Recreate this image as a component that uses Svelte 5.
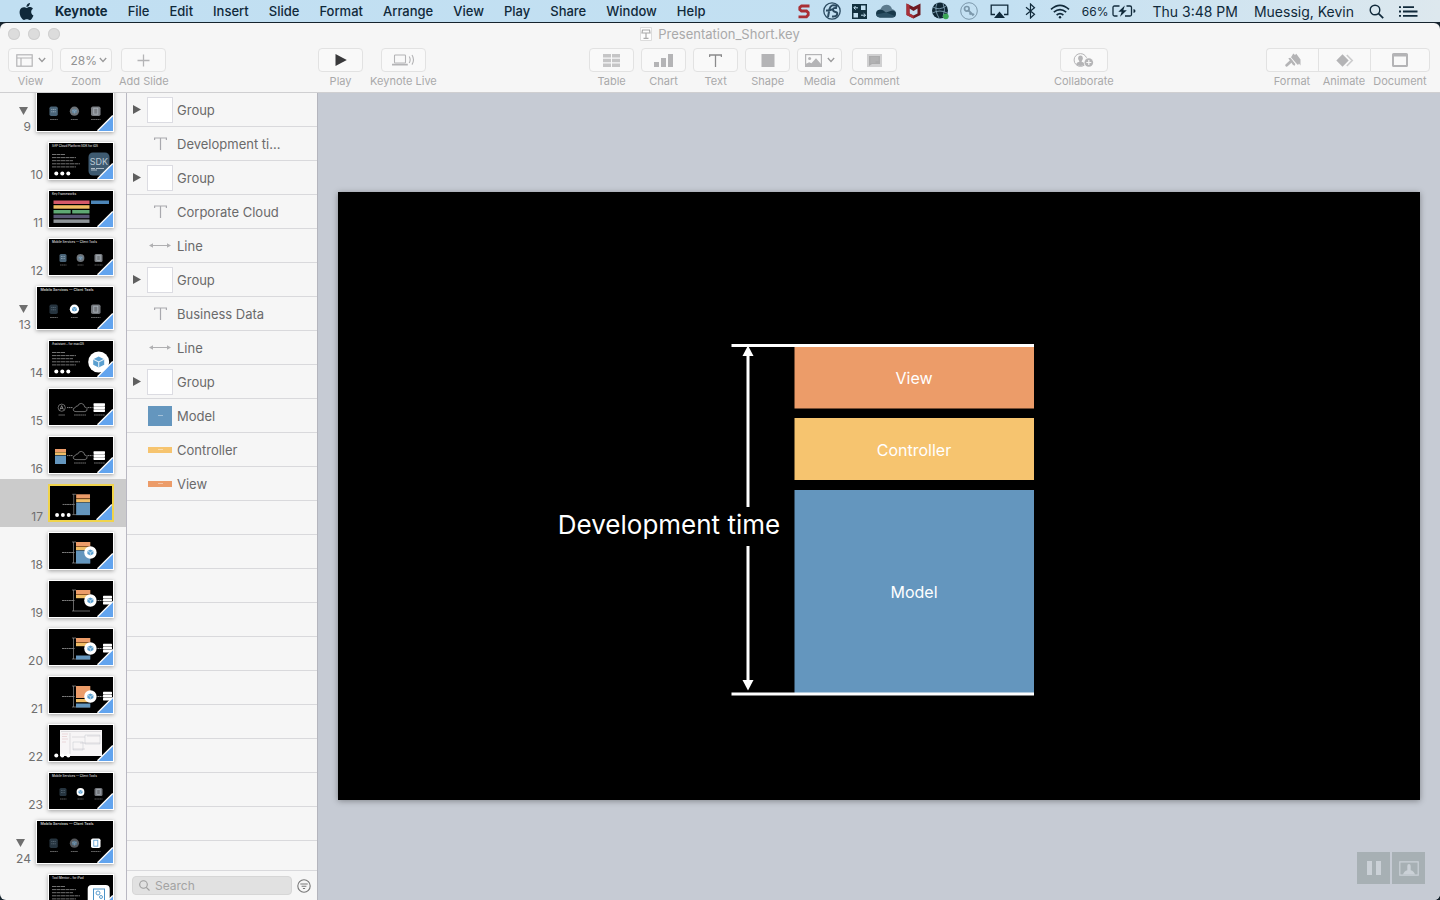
<script>
  const menus = ['File', 'Edit', 'Insert', 'Slide', 'Format', 'Arrange', 'View', 'Play', 'Share', 'Window', 'Help'];

  const playTools = [
    { label: 'Play', icon: 'play' },
    { label: 'Keynote Live', icon: 'live' }
  ];
  const insertTools = [
    { label: 'Table', icon: 'table' },
    { label: 'Chart', icon: 'chart' },
    { label: 'Text', icon: 'text' },
    { label: 'Shape', icon: 'shape' },
    { label: 'Media', icon: 'media' },
    { label: 'Comment', icon: 'comment' }
  ];
  const panelTools = [
    { label: 'Format', icon: 'format' },
    { label: 'Animate', icon: 'animate' },
    { label: 'Document', icon: 'document' }
  ];

  const slides = [
    { n: 9, big: true, kind: 'tools', lit: 0 },
    { n: 10, kind: 'sdk', title: 'SAP Cloud Platform SDK for iOS', dots: true },
    { n: 11, kind: 'bars', title: 'Key Frameworks' },
    { n: 12, kind: 'tools', lit: 0 },
    { n: 13, big: true, kind: 'tools', lit: 2 },
    { n: 14, kind: 'assistant', title: 'Assistant – for macOS', dots: true },
    { n: 15, kind: 'cloud' },
    { n: 16, kind: 'cloud', blocks: true },
    { n: 17, kind: 'mvc', o: 4, y: 14, b: 13, dots: true, selected: true },
    { n: 18, kind: 'mvc', o: 4, y: 14, b: 13, badge: true },
    { n: 19, kind: 'mvc', o: 4, y: 14, b: 0, badge: true, server: true },
    { n: 20, kind: 'mvc', o: 4, y: 14, b: 4, badge: true, server: true },
    { n: 21, kind: 'mvc', o: 12, y: 22, b: 4, badge: true, server: true },
    { n: 22, kind: 'screen', dots: true },
    { n: 23, kind: 'tools', lit: 2 },
    { n: 24, big: true, kind: 'tools', lit: 3 },
    { n: 25, kind: 'ipad', title: 'Tool Mentor – for iPad' }
  ];

  const objects = [
    { type: 'group', label: 'Group' },
    { type: 'text', label: 'Development ti...' },
    { type: 'group', label: 'Group' },
    { type: 'text', label: 'Corporate Cloud' },
    { type: 'line', label: 'Line' },
    { type: 'group', label: 'Group' },
    { type: 'text', label: 'Business Data' },
    { type: 'line', label: 'Line' },
    { type: 'group', label: 'Group' },
    { type: 'model', label: 'Model' },
    { type: 'controller', label: 'Controller' },
    { type: 'view', label: 'View' }
  ];
  const emptyRows = Array.from({ length: 12 });

  // Fill of the three client tool icons, by which of them is highlighted.
  function toolFill(lit, i) {
    if (lit === i) return '#ffffff';
    if (lit === 0) return ['#4a6478', '#6e747a', '#7b7f84'][i - 1];
    return ['#26343f', '#55585c', '#74777c'][i - 1];
  }
</script>

{#snippet chevron()}
  <svg class="chev" width="8" height="6" viewBox="0 0 8 6" fill="none" stroke="currentColor" stroke-width="1.3"><path d="M.8 1 4 4.5 7.2 1" /></svg>
{/snippet}

{#snippet toolIcon(name)}
  {#if name === 'view'}
    <svg width="17" height="13" viewBox="0 0 17 13" fill="none" stroke="currentColor" stroke-width="1.2"><rect x=".8" y=".8" width="15.4" height="11.4" /><path d="M1 4h15M5 4v8" /></svg>
  {:else if name === 'add'}
    <svg width="13" height="13" viewBox="0 0 13 13" stroke="currentColor" stroke-width="1.3"><path d="M6.5.5v12M.5 6.5h12" /></svg>
  {:else if name === 'play'}
    <svg width="12" height="12" viewBox="0 0 12 12" fill="#39393b"><path d="M.5 0 11.8 6 .5 12z" /></svg>
  {:else if name === 'live'}
    <svg width="23" height="12" viewBox="0 0 23 12" fill="none" stroke="currentColor" stroke-width="1.1"><rect x="2.5" y="1" width="11" height="8" rx=".8" /><path d="M0 10.6h15.8" stroke-width="1.6" /><path d="M17.2 2.5q2 3.2 0 6.5M20 1q3 4.7 0 9.6" /></svg>
  {:else if name === 'table'}
    <svg width="17" height="13" viewBox="0 0 17 13" fill="currentColor" opacity=".75"><path d="M0 0h8v3.6H0zM9 0h8v3.6H9zM0 4.7h8v3.6H0zM9 4.7h8v3.6H9zM0 9.4h8V13H0zM9 9.4h8V13H9z" /></svg>
  {:else if name === 'chart'}
    <svg width="19" height="14" viewBox="0 0 19 14" fill="currentColor"><path d="M0 9h5v5H0zM7 5h5v9H7zM14 1h5v13h-5z" /></svg>
  {:else if name === 'text'}
    <svg width="13" height="13" viewBox="0 0 13 13" fill="none" stroke="#8b8b8c" stroke-width="1.3"><path d="M.6 3V1h11.8v2M6.5 1v12" /></svg>
  {:else if name === 'shape'}
    <svg width="14" height="13" viewBox="0 0 14 13" fill="currentColor"><path d="M.5 0h13v13H.5z" /></svg>
  {:else if name === 'media'}
    <svg width="17" height="13" viewBox="0 0 17 13"><rect x=".6" y=".6" width="15.8" height="11.8" fill="none" stroke="currentColor" stroke-width="1.2" /><circle cx="4.6" cy="4.4" r="1.5" fill="currentColor" /><path d="M1 12V9.8l3.2-1.6 2.2 1 4.6-5L16 10v2z" fill="currentColor" /></svg>
  {:else if name === 'comment'}
    <svg width="15" height="13" viewBox="0 0 15 13"><path d="M0 0h15v13H0z" fill="currentColor" opacity=".6" /><path d="M2 2h11v8H5l-3 2z" fill="#a2a2a4" opacity=".8" /><path d="M3.5 4h8M3.5 6h8M3.5 8h5" stroke="#c4c4c4" stroke-width=".6" /></svg>
  {:else if name === 'collaborate'}
    <svg width="21" height="14" viewBox="0 0 21 14"><circle cx="7.5" cy="7" r="6.4" fill="none" stroke="currentColor" /><ellipse cx="7.5" cy="5.2" rx="2.3" ry="2.8" fill="currentColor" /><path d="M3 11.2q1-2 3.3-2.4V7h2.4v1.8q2.3.4 3.3 2.4Q10 13 7.5 13T3 11.2z" fill="currentColor" /><circle cx="15.8" cy="9.5" r="5.1" fill="#f6f6f6" /><circle cx="15.8" cy="9.5" r="4.3" fill="currentColor" /><path d="M15.8 7v5M13.3 9.5h5" stroke="#f6f6f6" stroke-width="1.2" /></svg>
  {:else if name === 'format'}
    <svg width="16" height="14" viewBox="0 0 16 14" fill="currentColor"><path d="M1.7 12.3 6 8.3" fill="none" stroke="currentColor" stroke-width="2.8" stroke-linecap="round" /><path d="m3.3 5.3 2-.6 5 6.3-.5 1.7-1.8-.6z" /><path d="M6 4.2 8.3.4 10 2 11.3.8 15.5 6.5v6L14 10.6l-1 1.5-1.8-1.8z" /></svg>
  {:else if name === 'animate'}
    <svg width="18" height="13" viewBox="0 0 18 13"><path d="m6.5.3 6.2 6.2-6.2 6.2L.3 6.5z" fill="currentColor" /><path d="m10.8 1 5.4 5.5-5.4 5.5" fill="none" stroke="currentColor" stroke-width="1.6" opacity=".65" /></svg>
  {:else if name === 'document'}
    <svg width="16" height="14" viewBox="0 0 16 14" fill="none" stroke="currentColor"><rect x="1" y="1" width="14" height="12" rx=".6" stroke-width="2" /><path d="M1 2.2h14" stroke-width="2.6" /></svg>
  {/if}
{/snippet}

{#snippet tool(t)}
  <button class="tool" type="button">
    <span class="cap {t.icon}">{@render toolIcon(t.icon)}{#if t.icon === 'media' || t.icon === 'view'}{@render chevron()}{/if}</span>
    <span class="name">{t.label}</span>
  </button>
{/snippet}

{#snippet server(x, y, w)}
  <g fill="#fff"><rect {x} {y} width={w} height="2.6" rx=".6" /><rect {x} y={y + 3} width={w} height="2.6" rx=".6" /><rect {x} y={y + 6} width={w} height="2.6" rx=".6" /></g>
{/snippet}

{#snippet bodyLines()}
  <path d="M3 11.5h13M3 14.6h24M3 17.7h21M3 20.8h28M3 23.9h24" stroke="#8f8f8f" stroke-width=".8" stroke-dasharray="4 .5" />
{/snippet}

{#snippet cube(cx, cy, s)}
  <path d="M{cx - s} {cy - s * 0.5}L{cx} {cy - s}L{cx + s} {cy - s * 0.5}V{cy + s * 0.5}L{cx} {cy + s}L{cx - s} {cy + s * 0.5}z" fill="#5a9fd0" />
  <path d="M{cx - s} {cy - s * 0.5}L{cx} {cy}L{cx + s} {cy - s * 0.5}M{cx} {cy}V{cy + s}" fill="none" stroke="#e3f0f9" stroke-width={s * 0.2} />
{/snippet}

{#snippet thumb(s)}
  <svg class="pic" viewBox="0 0 64 36" preserveAspectRatio="xMidYMid slice" aria-hidden="true">
    <rect width="64" height="36" fill="#000" />
    {#if s.title || s.kind === 'tools'}
      <text x="3" y="3.8" class="tiny">{s.title ?? 'Mobile Services — Client Tools'}</text>
    {/if}
    {#if s.kind === 'tools'}
      <rect x="10.5" y="15" width="7" height="8" rx="1.5" fill={toolFill(s.lit, 1)} />
      <path d="M12 17.5h4M12 19.5h4" stroke="#9fb3c2" stroke-width=".8" stroke-dasharray="1 .4" opacity={s.lit ? 0.4 : 0.9} />
      <circle cx="31.5" cy="19" r="3.9" fill={toolFill(s.lit, 2)} />
      <g opacity={s.lit === 2 ? 1 : 0.5}>{@render cube(31.5, 19, 2)}</g>
      <rect x="45.5" y="15" width="8" height="8" rx="1.5" fill={toolFill(s.lit, 3)} />
      <rect x="47.8" y="16.5" width="3.4" height="5" fill="none" stroke={s.lit === 3 ? '#5a9fd0' : '#a9b2ba'} stroke-width=".7" />
      <path d="M11 26h6.5M28.5 26h6M45.5 26h8" stroke="#777" stroke-width=".7" stroke-dasharray="1.5 .3" />
    {:else if s.kind === 'sdk'}
      {@render bodyLines()}
      <rect x="39.5" y="9.5" width="21" height="23" rx="4.5" fill="#3e5a70" />
      <text x="50" y="22.3" text-anchor="middle" class="sdk">SDK</text>
      <path d="M42 25.5h4M47 25.5h8M42 27h6" stroke="#b9c6cf" stroke-width=".9" />
    {:else if s.kind === 'bars'}
      <rect x="4.5" y="9.5" width="36" height="3.5" fill="#d4596a" /><rect x="42" y="9.5" width="18" height="3.5" fill="#4d86b8" />
      <rect x="4.5" y="14.2" width="36" height="3.5" fill="#efbd63" />
      <rect x="4.5" y="19" width="17.2" height="3.5" fill="#5fa873" /><rect x="23.2" y="19" width="17.3" height="3.5" fill="#5fa873" />
      <rect x="4.5" y="23.7" width="36" height="3.5" fill="#5a5775" />
      <rect x="4.5" y="28.4" width="36" height="3.5" fill="#8f9599" />
    {:else if s.kind === 'assistant'}
      {@render bodyLines()}
      <circle cx="49.7" cy="21" r="10.5" fill="#fff" />
      {@render cube(49.7, 21, 5.5)}
    {:else if s.kind === 'cloud'}
      {#if s.blocks}
        <rect x="6" y="12" width="11" height="3" fill="#ec9c69" /><rect x="6" y="15.3" width="11" height="2.7" fill="#f0bd66" /><rect x="6" y="18.5" width="11" height="8.5" fill="#6496be" />
      {:else}
        <circle cx="12.7" cy="18.7" r="3.6" fill="none" stroke="#aaa" stroke-width=".6" /><path d="m11 20.6 1.7-4 1.7 4M11.6 19.4h2.2" fill="none" stroke="#ccc" stroke-width=".6" /><path d="M9.5 26h6.5" stroke="#888" stroke-width=".7" />
      {/if}
      <path d="M27 22.6h9q2.6-.5 2-3-.6-1.7-2.3-1.5-.3-3.3-3.4-3.7-2.8 0-3.5 2.6-2.3-.2-2.6 1.7-2.3.4-2 2.3.5 1.6 2.8 1.6z" fill="none" stroke="#999" stroke-width=".7" />
      <path d="M18 18.6h6M38.5 18.6h5" stroke="#bbb" stroke-width=".7" stroke-dasharray="1.5 .5" />
      {@render server(44.5, 14.3, 11.5)}
      <path d="M25 26h12M45 26h11" stroke="#999" stroke-width=".7" stroke-dasharray="1.8 .3" />
    {:else if s.kind === 'mvc'}
      <path d="M23 9h4M24.5 9v21M23 30h18" stroke="#aaa" stroke-width=".6" fill="none" />
      <path d="M13 19.5h12.5" stroke="#999" stroke-width=".8" stroke-dasharray="2 .3" />
      <rect x="27" y="9" width="14.3" height={s.o} fill="#ec9c69" />
      {#if s.o === 4}<rect x="27" y="13" width="14.3" height="1.2" fill="#8a5426" />{/if}
      <rect x="27" y={s.y} width="14.3" height="3.2" fill="#f0bd66" />
      {#if s.b}<rect x="27" y={30.5 - s.b} width="14.3" height={s.b} fill="#6496be" />{/if}
      {#if s.badge}<circle cx="41.4" cy="19.5" r="6.2" fill="#fff" />{@render cube(41.4, 19.5, 3)}{/if}
      {#if s.server}<path d="M48.5 19.5h5" stroke="#bbb" stroke-width=".8" stroke-dasharray="1.5 .5" />{@render server(54, 14.8, 9)}{/if}
    {:else if s.kind === 'screen'}
      <rect x="11" y="5" width="42" height="26" fill="#f7f5f6" />
      <path d="M12 6.5h40M21 8v21M23 12h13M38 11h13M31 18h20M24 24h12" stroke="#c3c0c6" stroke-width=".5" fill="none" /><path d="M13 9h6M13 11.5h5M13 14h6M13 17h4" stroke="#dfb8bd" stroke-width=".5" /><path d="M36 10h15v9H36zM24 17h10v8H24z" fill="none" stroke="#b5bac6" stroke-width=".4" />
    {:else if s.kind === 'ipad'}
      {@render bodyLines()}
      <rect x="38.7" y="10" width="22" height="24" rx="4" fill="#fff" />
      <rect x="44.5" y="14" width="11" height="15" fill="none" stroke="#4b93c8" stroke-width="1" /><circle cx="49" cy="18" r="2" fill="none" stroke="#4b93c8" stroke-width=".9" /><circle cx="52" cy="22" r="1.5" fill="none" stroke="#4b93c8" stroke-width=".9" />
    {/if}
    {#if s.dots}
      <g fill="#fff"><circle cx="7.3" cy="30.4" r="2" /><circle cx="13.3" cy="30.4" r="2" /><circle cx="19.3" cy="30.4" r="2" /></g>
    {/if}
  </svg>
{/snippet}

<div class="desktop">
  <header class="menubar">
    <nav class="menus">
      <button type="button" aria-label="Apple" class="apple"><svg width="17" height="17" viewBox="0 0 24 24" fill="currentColor"><path d="M12.152 6.896c-.948 0-2.415-1.078-3.96-1.04-2.04.027-3.91 1.183-4.961 3.014-2.117 3.675-.546 9.103 1.519 12.09 1.013 1.454 2.208 3.09 3.792 3.039 1.52-.065 2.09-.987 3.935-.987 1.831 0 2.35.987 3.96.948 1.637-.026 2.676-1.48 3.676-2.948 1.156-1.688 1.636-3.325 1.662-3.415-.039-.013-3.182-1.221-3.22-4.857-.026-3.04 2.48-4.494 2.597-4.559-1.429-2.09-3.623-2.324-4.39-2.376-2-.156-3.675 1.09-4.61 1.09zM15.53 3.83c.843-1.012 1.4-2.427 1.245-3.83-1.207.052-2.662.805-3.532 1.818-.78.896-1.454 2.338-1.273 3.714 1.338.104 2.715-.688 3.559-1.701" /></svg></button>
      <button type="button" class="app-name">Keynote</button>
      {#each menus as m}<button type="button">{m}</button>{/each}
    </nav>
    <div class="status">
      <span class="cell"><svg width="12" height="15" viewBox="0 0 12 15" fill="none" stroke="#a92f35" stroke-width="2.8"><path d="M11.5 2H3.5L1.8 3.5v2L3.5 7h5l1.7 1.7v2.2L8.5 12.8H.5" /></svg></span>
      <span class="cell"><svg width="18" height="18" viewBox="0 0 18 18" fill="none" stroke="#2c4b61"><circle cx="9" cy="9" r="8.2" stroke-width="1.3" /><path d="M14.5 4.5Q8 1 6.5 7L5 15M3 8.5q4 .5 7-1.5M14 6q-4-.5-4 1.5t2.5 2.5T14 13q-1 2-5 1.5" stroke-width="2" /></svg></span>
      <span class="cell mid"><svg width="15" height="15" viewBox="0 0 15 15"><path d="M0 0h15v15H0z" fill="#12303f" /><path d="M9 1.5h4.5V6H9zM1.5 9H6v4.5H1.5z" fill="#c3e0f1" /><path d="M6 3.8H2M3.6 2 1.8 3.8l1.8 1.8M9 11.2h4.5M11.7 9.4l1.8 1.8-1.8 1.8" fill="none" stroke="#c3e0f1" /></svg></span>
      <span class="cell mid"><svg width="20" height="14" viewBox="0 0 20 14"><path d="M4 7.5Q5 1 10.5.8q4 0 5.5 4.2 4 1 4 4.5L10 12z" fill="#5d7b8e" /><path d="M4 13.5q-4-.5-4-4t4-4q3 .2 6 3l6-2q4 0 4 3.5t-4 3.5z" fill="#17384a" /><path d="M4 13.5q-3 0-4-3l10-2 9 3.5q-1.2 1.5-3 1.5z" fill="#2c5064" /></svg></span>
      <span class="cell mid"><svg width="15" height="16" viewBox="0 0 15 16"><path d="M.5.5 7.5 4l7-3.5V12l-7 3.500-7-3.500z" fill="#6e1a22" /><path d="M3.5 5.5 7.5 8l4-2.5v5l-4 2-4-2z" fill="#c3dff0" /><path d="M.5.5 3.5 2v8.500l4 2v3l-7-3.500z" fill="#aa3038" /></svg></span>
      <span class="cell"><svg width="19" height="18" viewBox="0 0 19 18"><circle cx="9" cy="8.5" r="8" fill="#0f2634" /><path d="M2 5q6 4 13-1M1.5 11Q9 7 16 11M6 1q-3 7 2 15M12 1q3 6 0 14" fill="none" stroke="#8eb0c4" stroke-width=".8" /><circle cx="14.8" cy="14.3" r="2.9" fill="#3aa655" /></svg></span>
      <span class="cell"><svg width="18" height="18" viewBox="0 0 18 18" fill="none" stroke="#7b97aa"><circle cx="9" cy="9" r="8.3" stroke-width="1" /><circle cx="6.8" cy="6.8" r="2.3" stroke-width="1.7" /><path d="m8.5 8.5 5 5M11 11l-1.5 1.5M13 12l1 1" stroke-width="1.8" /></svg></span>
      <span class="cell airplay"><svg width="19" height="15" viewBox="0 0 19 15"><path d="M5 10.5H1.2V1.2h16.6v9.3H14" fill="none" stroke="currentColor" stroke-width="1.3" /><path d="m9.5 7.5 5.5 6.5H4z" fill="currentColor" /></svg></span>
      <span class="cell"><svg width="11" height="16" viewBox="0 0 11 16" fill="none" stroke="currentColor" stroke-width="1.2"><path d="m1 4.3 8.5 7-4 3.7V1l4 3.7-8.5 7" /></svg></span>
      <span class="cell wide"><svg width="20" height="15" viewBox="0 0 20 15" fill="none" stroke="currentColor" stroke-width="1.6"><path d="M1 5.3q9-8 18 0M3.8 8.2q6.2-5.2 12.4 0M6.6 11q3.4-2.7 6.8 0" /><circle cx="10" cy="13.3" r="1.2" fill="currentColor" stroke="none" /></svg></span>
      <span class="battery">66%<svg width="24" height="12" viewBox="0 0 24 12"><path d="M7.5 1h-5Q1 1 1 2.5v7Q1 11 2.5 11h3M14.5 1H18q1.500 0 1.500 1.500v7q0 1.500-1.500 1.500h-5" fill="none" stroke="currentColor" stroke-width="1.3" /><path d="M21.5 4q2 .5 2 2t-2 2z" fill="currentColor" /><path d="M12.800.5 6.300 6.800h3.400L8 11.800l6.800-6.600h-3.500z" fill="currentColor" /></svg></span>
      <span class="clock">Thu 3:48 PM</span>
      <span class="user">Muessig, Kevin</span>
      <button type="button" aria-label="Spotlight" class="glyph"><svg width="15" height="15" viewBox="0 0 15 15" fill="none" stroke="currentColor" stroke-width="1.4"><circle cx="6" cy="6" r="4.8" /><path d="m9.6 9.6 4.6 4.6" stroke-width="1.7" /></svg></button>
      <button type="button" aria-label="Notification Center" class="glyph"><svg width="19" height="11" viewBox="0 0 19 11" stroke="currentColor" stroke-width="1.8"><path d="M0 1.2h2M0 5.5h2M0 9.8h2M4 1.2h11M4 5.5h14.5M4 9.8h14.5" /></svg></button>
    </div>
  </header>

  <div class="window">
    <div class="chrome">
      <div class="titlebar">
        <div class="lights"><button type="button" aria-label="Close"></button><button type="button" aria-label="Minimize"></button><button type="button" aria-label="Zoom window"></button></div>
        <div class="title"><svg width="12" height="14" viewBox="0 0 12 14"><path d="M.5.5h11v13H.5z" fill="#fdfdfd" stroke="#dcdcdc" /><path d="M2.5 3h7l.5 3H2z" fill="none" stroke="#aaa" stroke-width="1.2" /><path d="M6 6v5M3.5 11.3h5" stroke="#aaa" stroke-width="1.2" /></svg>Presentation_Short.key</div>
      </div>
      <div class="toolbar">
        <div class="tools">
          {@render tool({ label: 'View', icon: 'view' })}
          <div class="tool zoom">
            <span class="cap"><select id="zoom"><option>28%</option><option>50%</option><option>100%</option></select>{@render chevron()}</span>
            <label class="name" for="zoom">Zoom</label>
          </div>
          {@render tool({ label: 'Add Slide', icon: 'add' })}
        </div>
        <div class="tools">{#each playTools as t}{@render tool(t)}{/each}</div>
        <div class="tools">{#each insertTools as t}{@render tool(t)}{/each}</div>
        <div class="tools">{@render tool({ label: 'Collaborate', icon: 'collaborate' })}</div>
        <div class="tools joined">{#each panelTools as t}{@render tool(t)}{/each}</div>
      </div>
    </div>

    <div class="body">
      <aside class="navigator">
        <ul>
          {#each slides as s}
            <li class:selected={s.selected} class:big={s.big}>
              <span class="num">{#if s.big}<svg width="9" height="8" viewBox="0 0 9 8" fill="#6f6f6f"><path d="M0 0h9L4.5 8z" /></svg>{/if}<span>{s.n}</span></span>
              <button type="button" class="thumb" aria-label="Slide {s.n}">
                {@render thumb(s)}
                <svg class="fold" width="16" height="16" viewBox="0 0 16 16"><path d="M16 .5V16H.5z" fill="#62a4ee" /><path d="M.5 15.8 15.8.5" stroke="#fff" stroke-width="1.3" /></svg>
              </button>
            </li>
          {/each}
        </ul>
      </aside>

      <aside class="objects">
        <ul>
          {#each objects as o}
            <li>
              <span class="disclose">{#if o.type === 'group'}<svg width="8" height="9" viewBox="0 0 8 9" fill="#5f5f5f"><path d="M0 0v9l8-4.5z" /></svg>{/if}</span>
              <span class="swatch">
                {#if o.type === 'group'}<span class="blank"></span>
                {:else if o.type === 'text'}<svg width="13" height="13" viewBox="0 0 13 13" fill="none" stroke="#a9a9ae" stroke-width="1.2"><path d="M.6 3V1h11.8v2M6.5 1v12" /></svg>
                {:else if o.type === 'line'}<svg width="22" height="5" viewBox="0 0 22 5" fill="#b0b0b2"><path d="M3 2h16v1H3z" /><path d="M0 2.5 4 .2v4.6zM22 2.5 18 .2v4.6z" /></svg>
                {:else}<span class="chip {o.type}"></span>{/if}
              </span>
              <span class="label">{o.label}</span>
            </li>
          {/each}
          {#each emptyRows as _}<li></li>{/each}
        </ul>
        <div class="finder">
          <label class="search"><svg width="11" height="11" viewBox="0 0 11 11" fill="none" stroke="#9c9c9c" stroke-width="1.1"><circle cx="4.5" cy="4.5" r="3.8" /><path d="m7.3 7.3 3.2 3.2" /></svg><input type="search" placeholder="Search" aria-label="Search" /></label>
          <button type="button" class="filter" aria-label="Filter"><svg width="14" height="14" viewBox="0 0 14 14" fill="none" stroke="#777" stroke-width="1.1"><circle cx="7" cy="7" r="6.2" /><path d="M3.3 5h7.4M4.6 7.3h4.8M5.9 9.5h2.2" /></svg></button>
        </div>
      </aside>

      <main>
        <svg class="slide" viewBox="0 0 1082 608">
          <rect width="1082" height="608" fill="#000" />
          <rect x="456.5" y="154" width="239.5" height="62.5" fill="#ec9c69" />
          <rect x="456.5" y="226" width="239.5" height="62" fill="#f6c46f" />
          <rect x="456.5" y="298" width="239.5" height="203" fill="#6496be" />
          <g fill="#fff">
            <rect x="393.5" y="152" width="302.5" height="3" /><rect x="393.5" y="500.5" width="302.5" height="3" />
            <path d="M408.5 163h3v152h-3zM408.5 354h3v136h-3z" />
            <path d="M410 153.5l5.5 10.5h-11z" />
            <path d="M410 498.5l5.5-10.5h-11z" />
            <text class="caption" x="331" y="342" text-anchor="middle">Development time</text>
            <text x="576" y="192" text-anchor="middle">View</text>
            <text x="576" y="264" text-anchor="middle">Controller</text>
            <text x="576" y="406" text-anchor="middle">Model</text>
          </g>
        </svg>
        <div class="recorder">
          <button type="button" aria-label="Pause"><svg width="14" height="14" viewBox="0 0 14 14" fill="#cbd1d7"><path d="M0 0h5v14H0zM9 0h5v14H9z" /></svg></button>
          <button type="button" aria-label="Presenter"><svg width="20" height="15" viewBox="0 0 20 15"><path d="M.8.8h18.4v13.4H.8z" fill="none" stroke="#cbd1d7" stroke-width="1.2" /><path d="M4 13.5q1-3.5 4.3-4.3V5q0-2 1.7-2t1.7 2v4.2q3.3.8 4.3 4.3z" fill="#cbd1d7" /></svg></button>
        </div>
      </main>
    </div>
  </div>
</div>

<style>
  :global(body) { margin: 0; }
  .desktop { display: flex; flex-direction: column; height: 100vh; overflow: hidden; background: #16242e; font-family: Inter, "Liberation Sans", sans-serif; }
  button { border: 0; padding: 0; background: none; font: inherit; color: inherit; }
  ul { list-style: none; margin: 0; padding: 0; }
  svg { display: block; flex: none; }

  .menubar { display: flex; justify-content: space-between; height: 22px; margin-bottom: 1px; flex: none; background: linear-gradient(90deg, #c1dff2 0%, #c3e0f2 70%, #dde8ee 100%); color: #10293a; font-size: 14px; white-space: nowrap; }
  .menus { display: flex; align-items: center; gap: 20px; padding-left: 18px; font-size: 13px; font-weight: 500; }
  .app-name { font-weight: 700; }
  .status { display: flex; align-items: center; padding-right: 22px; }
  .cell { display: flex; justify-content: center; width: 28px; }
  .cell.mid { width: 27px; }
  .cell.wide { width: 31px; }
  .cell.airplay { width: 34px; }
  .battery { display: flex; align-items: center; gap: 4px; font-size: 12px; margin-left: 6px; }
  .clock { margin-left: 16px; }
  .user { margin-left: 16px; }
  .glyph { margin-left: 15px; }

  .window { display: flex; flex-direction: column; flex: 1; min-height: 0; border-radius: 6px; overflow: hidden; background: #f6f6f6; }
  .chrome { flex: none; border-bottom: 1px solid #cfcfd1; }
  .titlebar { display: grid; grid-template-columns: 1fr auto 1fr; align-items: center; height: 22px; }
  .lights { display: flex; gap: 8px; padding-left: 8px; }
  .lights button { width: 12px; height: 12px; border-radius: 50%; background: #dcdcdc; box-shadow: inset 0 0 0 1px #d0d0d0; }
  .title { display: flex; align-items: center; gap: 6px; font-size: 13px; color: #a9a9aa; }
  .toolbar { display: grid; grid-template-columns: auto 149fr auto 152fr auto 154fr auto 152fr auto; padding: 3px 10px 3px 8px; color: #b4b4b6; }
  .tools { display: flex; gap: 7px; }
  .tools:nth-child(2) { grid-column: 3; }
  .tools:nth-child(3) { grid-column: 5; }
  .tools:nth-child(4) { grid-column: 7; }
  .tools:nth-child(5) { grid-column: 9; }
  .tool { display: flex; flex-direction: column; align-items: center; gap: 1px; min-width: 45px; }
  .cap { display: flex; align-items: center; justify-content: center; gap: 5px; width: 45px; height: 24px; box-sizing: border-box; border: 1px solid #e2e2e2; border-radius: 4px; background: #f9f9f9; }
  .cap.collaborate { width: 48px; }
  .name { font-size: 11px; line-height: 16px; color: #a9a9aa; white-space: nowrap; }
  .chev { color: #9a9a9b; }
  .zoom .cap { width: 52px; gap: 1px; padding-left: 5px; }
  .zoom select { appearance: none; border: 0; padding: 0; background: none; font: 12px Inter, sans-serif; color: #929293; width: 27px; }
  .joined { gap: 0; }
  .joined .tool { width: 52px; }
  .joined .tool:last-child { width: 60px; }
  .joined .cap { width: 100%; border-radius: 0; border-right-width: 0; }
  .joined .tool:first-child .cap { border-radius: 4px 0 0 4px; }
  .joined .tool:last-child .cap { border-radius: 0 4px 4px 0; border-right-width: 1px; }

  .body { display: flex; flex: 1; min-height: 0; }
  .navigator { width: 126px; flex: none; overflow: hidden; border-right: 1px solid #b9b8c2; }
  .navigator ul { margin-top: -10px; }
  .navigator li { display: flex; justify-content: flex-end; gap: 5px; padding: 5px 12px 5px 0; }
  .navigator li.selected { background: #cbcbcb; }
  .num { display: flex; flex-direction: column; justify-content: flex-end; align-items: flex-end; gap: 7px; min-width: 12px; font-size: 12px; line-height: 10px; color: #6f6f6f; }
  .num svg { align-self: flex-start; }
  .thumb { position: relative; display: block; width: 66px; height: 38px; box-sizing: border-box; border: 1px solid #fff; box-shadow: 0 1px 4px rgba(0, 0, 0, 0.35); }
  .big .thumb { width: 78px; height: 44px; }
  .selected .thumb { border: 2px solid #f0d44c; box-shadow: none; }
  .pic { width: 100%; height: 100%; }
  .fold { position: absolute; right: 0; bottom: 0; }
  .tiny { font-size: 3px; font-weight: 600; fill: #ccc; }
  .sdk { font-size: 9px; fill: #b9c8d3; }

  .objects { display: flex; flex-direction: column; width: 190px; flex: none; border-right: 1px solid #b4b5bd; }
  .objects ul { flex: 1; min-height: 0; overflow: hidden; }
  .objects li { display: flex; align-items: center; height: 33px; border-bottom: 1px solid #d9d9dc; font-size: 13px; color: #6a6a6b; }
  .disclose { width: 14px; padding-left: 6px; }
  .swatch { display: flex; justify-content: center; width: 26px; margin-right: 4px; }
  .blank { width: 24px; height: 24px; border: 1px solid #dcdce2; background: #fff; }
  .chip { display: grid; place-items: center; width: 24px; height: 6px; }
  .chip::after { content: ""; width: 5px; height: 1px; background: rgba(255, 255, 255, 0.4); }
  .chip.model { height: 20px; background: #6496be; }
  .chip.controller { background: #f6c46f; }
  .chip.view { background: #ec9c69; }
  .finder { display: flex; align-items: center; gap: 5px; height: 29px; padding: 0 6px 0 5px; border-top: 1px solid #d9d9dc; }
  .search { display: flex; align-items: center; gap: 5px; flex: 1; min-width: 0; height: 17px; padding: 0 6px; border: 1px solid #d6d6d6; border-radius: 4px; background: #e1e1e1; }
  .search input { flex: 1; width: 0; min-width: 0; border: 0; padding: 0; background: none; outline: none; font: 12px Inter, sans-serif; }
  .search input::placeholder { color: #a3a3a3; opacity: 1; }

  main { position: relative; display: flex; align-items: center; flex: 1; min-width: 0; padding: 0 20px 2px; background: #c6cbd4; }
  .slide { flex: 1; min-width: 0; box-shadow: 0 1px 6px rgba(0, 0, 0, 0.35); font-size: 16px; }
  .caption { font-size: 26px; }
  .recorder { position: absolute; right: 15px; bottom: 16px; display: flex; gap: 2px; }
  .recorder button { display: grid; place-items: center; width: 33px; height: 32px; background: #a7b0b4; }
</style>
